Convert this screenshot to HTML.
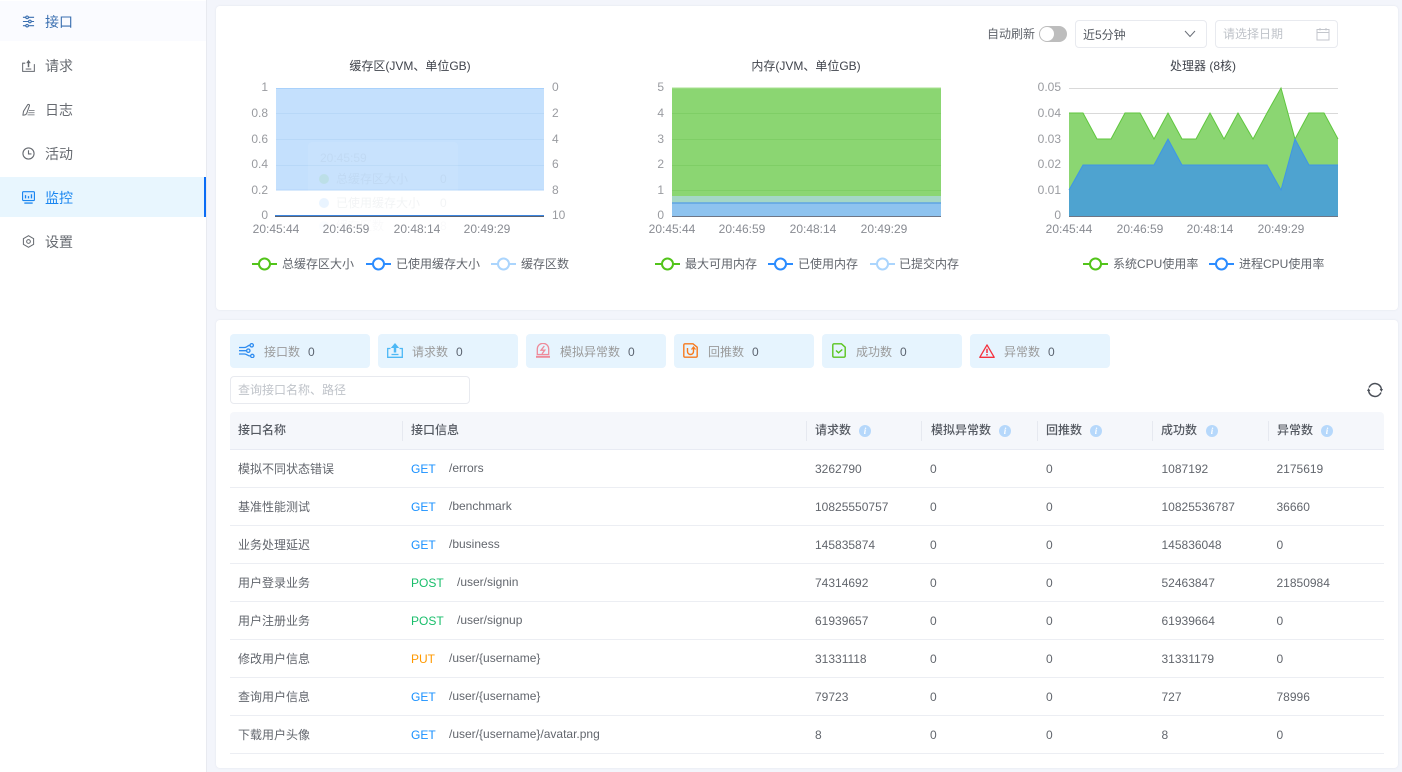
<!DOCTYPE html>
<html lang="zh"><head><meta charset="utf-8"><title>监控</title>
<style>
*{box-sizing:border-box}
html,body{margin:0;padding:0;width:1402px;height:772px;overflow:hidden;background:#f3f5fb;font-family:"Liberation Sans","Noto Sans CJK SC",sans-serif;font-size:12px;color:#62666d}
.a{position:absolute;white-space:nowrap}
#side{position:absolute;left:0;top:0;width:207px;height:772px;background:#fff;border-right:1px solid #e8eaf0}
.m{position:absolute;left:0;width:206px;height:40px;line-height:40px;font-size:14px;padding-left:45px;color:#666a70}
.m svg{position:absolute;left:22px;top:13px}
.panel{position:absolute;left:216px;width:1182px;background:#fff;border-radius:4px;box-shadow:0 0 2px rgba(40,50,90,.08)}
.st{position:absolute;top:334px;width:140px;height:34px;background:#e6f4fe;border-radius:4px;line-height:36px;color:#9a9a9a}
.st svg{position:absolute;top:9px}
.st b{font-weight:400;color:#5c6470;margin-left:8px}
.st span{position:absolute;top:0}
#hd{position:absolute;left:230px;top:412px;width:1154px;height:38px;background:#f5f7fb;border-bottom:1px solid #e8ebf3;border-radius:4px 4px 0 0}
.th{position:absolute;top:0;line-height:37px;color:#555a62;font-weight:500}
.sep{position:absolute;top:9px;width:1px;height:20px;background:#e6e9f0}
.i{position:absolute;top:13px;width:12px;height:12px;border-radius:50%;background:#b6d8fb;color:#fff;font:italic bold 9px/12px "Liberation Serif",serif;text-align:center}
.row{position:absolute;left:230px;width:1154px;height:38px;border-bottom:1px solid #eceef3;line-height:37px;color:#62666d}
.row span{position:absolute;top:1px;white-space:nowrap}
.row .p{top:0}
.row .po{color:#19be6b}.row .pu{color:#ff9900}.row .g{color:#1890ff}
svg text{font-family:"Liberation Sans","Noto Sans CJK SC",sans-serif}
</style></head><body>

<div id="side">
<div style="position:absolute;left:0;top:1px;width:206px;height:40px;background:#fafbff"></div>
<div style="position:absolute;left:0;top:177px;width:206px;height:40px;background:#e8f6fe;border-right:2px solid #0a6cf5"></div>
<div class="m" style="top:2px;color:#3a6fb0"><svg width="13" height="13" viewBox="0 0 14 14" fill="none" stroke="#3a6fb0" stroke-width="1.2"><path d="M1 2.500h3M7 2.500h6M1 7h6M10 7h3M1 11.500h3M7 11.500h6"/><circle cx="5.500" cy="2.500" r="1.400"/><circle cx="8.500" cy="7" r="1.400"/><circle cx="5.500" cy="11.500" r="1.400"/></svg>接口</div>
<div class="m" style="top:46px"><svg width="13" height="13" viewBox="0 0 14 14" fill="none" stroke="#666a70" stroke-width="1.100"><path d="M3.500 4.500H.7v8.800h12.600V5.500"/><path d="M4 10.800h6"/><path d="M7 8.800V3.500" stroke-width="1.600"/><path d="M4.600 4.500 7 .8l2.400 3.700z" fill="#666a70" stroke="none"/></svg>请求</div>
<div class="m" style="top:90px"><svg width="13" height="13" viewBox="0 0 14 14" fill="none" stroke="#666a70"><path d="M1 13 1.600 9 6 2c.7-1 2.300-.4 2 .9L5 11.500C4 12.700 2.400 13.200 1 13z" stroke-width="1.100"/><path d="M7.500 8.200h6M6.800 10.500h6.700M6 12.800h7.500" stroke-width=".9"/></svg>日志</div>
<div class="m" style="top:134px"><svg width="13" height="13" viewBox="0 0 14 14" fill="none" stroke="#666a70" stroke-width="1.200"><circle cx="7" cy="7" r="6"/><path d="M7 3.500V7.500h3.200"/></svg>活动</div>
<div class="m" style="top:178px;color:#1a86f0"><svg width="13" height="13" viewBox="0 0 14 14"><rect x=".6" y=".8" width="12.800" height="9.500" rx="1" fill="#dcefff" stroke="#1a86f0" stroke-width="1.200"/><path d="M3.800 4.500v3.500M7 5.500V8M10.200 3.500V8" stroke="#1a86f0" stroke-width="1.400"/><path d="M2.500 13h9" stroke="#1a86f0" stroke-width="1.400"/></svg>监控</div>
<div class="m" style="top:222px"><svg width="13" height="13" viewBox="0 0 14 14" fill="none" stroke="#666a70" stroke-width="1.100"><path d="M7 .8 12.500 4v6L7 13.200 1.500 10V4z"/><circle cx="7" cy="7" r="2"/></svg>设置</div>
</div>

<div class="panel" style="top:6px;height:304px"></div>
<div class="panel" style="top:320px;height:448px"></div>

<!-- top controls -->
<div class="a" style="left:987px;top:26px;color:#62666d;line-height:17px">自动刷新</div>
<div class="a" style="left:1039px;top:26px;width:28px;height:16px;border-radius:8px;background:#bdbdbd"><div style="position:absolute;left:1px;top:1px;width:14px;height:14px;border-radius:50%;background:#fff"></div></div>
<div class="a" style="left:1075px;top:20px;width:132px;height:28px;border:1px solid #e8eaef;border-radius:4px;line-height:28px;padding-left:7px;color:#555a62">近5分钟<svg style="position:absolute;left:108px;top:8px" width="12" height="10" viewBox="0 0 12 10" fill="none" stroke="#6a6f78" stroke-width="1"><path d="M1 2l5 5.500L11 2"/></svg></div>
<div class="a" style="left:1215px;top:20px;width:123px;height:28px;border:1px solid #e8eaef;border-radius:4px;line-height:26px;padding-left:7px;color:#bfc3c9">请选择日期<svg style="position:absolute;left:100px;top:6px" width="14" height="14" viewBox="0 0 14 14" fill="none" stroke="#c3c6cc" stroke-width="1"><rect x="1" y="2.500" width="12" height="10.500"/><path d="M1 5.500h12M4 1v2.500M10 1v2.500"/></svg></div>

<!-- charts -->
<svg class="a" style="left:0;top:0" width="1402" height="320" font-size="12" fill="#999ba0">
<!-- chart 1 -->
<text x="410" y="70" text-anchor="middle" fill="#40444c">缓存区(JVM、单位GB)</text>
<g text-anchor="end"><text x="268" y="91">1</text><text x="268" y="117">0.8</text><text x="268" y="143">0.6</text><text x="268" y="168">0.4</text><text x="268" y="194">0.2</text><text x="268" y="219">0</text></g>
<g><text x="552" y="91">0</text><text x="552" y="117">2</text><text x="552" y="143">4</text><text x="552" y="168">6</text><text x="552" y="194">8</text><text x="552" y="219">10</text></g>
<rect x="276" y="88" width="268" height="102" fill="#c4e0fd"/>
<path d="M276 88.500H544" stroke="#a9d1fb"/>
<path d="M276 113.500H544M276 139.500H544M276 165.500H544" stroke="#b8d8f8"/>
<path d="M276 190H544" stroke="#b3d5fa"/>
<g opacity=".08"><rect x="308" y="142" width="150" height="102" rx="4" fill="#fff"/></g>
<g opacity=".09" fill="#7a8a9a"><text x="320" y="162">20:45:59</text><circle cx="324" cy="179" r="5" fill="#52c41a"/><text x="336" y="183">总缓存区大小</text><text x="440" y="183">0</text><circle cx="324" cy="203" r="5" fill="#1890ff"/><text x="336" y="207">已使用缓存大小</text><text x="440" y="207">0</text></g>
<g opacity=".04" fill="#7a8a9a"><circle cx="324" cy="226" r="5" fill="#a6d3ff"/><text x="336" y="230">缓存区数</text><text x="440" y="230">8</text></g>
<path d="M275 216.500H544" stroke="#5a6270" stroke-width="1"/>
<path d="M275 215.500H544" stroke="#3d86e0" stroke-width="1"/>
<g text-anchor="middle" fill="#888b92"><text x="276" y="233">20:45:44</text><text x="346" y="233">20:46:59</text><text x="417" y="233">20:48:14</text><text x="487" y="233">20:49:29</text></g>
<!-- chart 2 -->
<text x="806" y="70" text-anchor="middle" fill="#40444c">内存(JVM、单位GB)</text>
<g text-anchor="end"><text x="664" y="91">5</text><text x="664" y="117">4</text><text x="664" y="143">3</text><text x="664" y="168">2</text><text x="664" y="194">1</text><text x="664" y="219">0</text></g>
<rect x="672" y="88" width="269" height="128" fill="#8bd672"/>
<path d="M672 88H941" stroke="#a8e092"/>
<path d="M672 113.500H941M672 139.500H941M672 165.500H941M672 190.500H941" stroke="#7fce66"/>
<rect x="672" y="196" width="269" height="20" fill="#a4d7c6"/>
<rect x="672" y="203" width="269" height="13" fill="#8ec3ef"/>
<path d="M672 203H941" stroke="#5fa4e4" stroke-width="1.500"/>
<path d="M672 216.500H941" stroke="#6e7686"/>
<g text-anchor="middle" fill="#888b92"><text x="672" y="233">20:45:44</text><text x="742" y="233">20:46:59</text><text x="813" y="233">20:48:14</text><text x="884" y="233">20:49:29</text></g>
<!-- chart 3 -->
<text x="1203" y="70" text-anchor="middle" fill="#40444c">处理器 (8核)</text>
<g text-anchor="end"><text x="1061" y="91">0.05</text><text x="1061" y="117">0.04</text><text x="1061" y="143">0.03</text><text x="1061" y="168">0.02</text><text x="1061" y="194">0.01</text><text x="1061" y="219">0</text></g>
<path d="M1069 88.500H1338M1069 113.500H1338M1069 139.500H1338M1069 165.500H1338M1069 190.500H1338" stroke="#d9d9d9"/>
<path d="M1069 216V113 L1083 113 1097 139 1111 139 1125 113 1140 113 1154 139 1168 113 1182 139 1196 139 1210 113 1224 139 1238 113 1253 139 1267 113 1281 88 1295 139 1309 113 1324 113 1338 139V216Z" fill="#8bd672"/>
<path d="M1069 113 L1083 113 1097 139 1111 139 1125 113 1140 113 1154 139 1168 113 1182 139 1196 139 1210 113 1224 139 1238 113 1253 139 1267 113 1281 88 1295 139 1309 113 1324 113 1338 139" fill="none" stroke="#5fc63e"/>
<path d="M1069 216V190 L1083 165 1097 165 1111 165 1125 165 1140 165 1154 165 1168 139 1182 165 1196 165 1210 165 1224 165 1238 165 1253 165 1267 165 1281 190 1295 139 1309 165 1324 165 1338 165V216Z" fill="#4ea3d0"/>
<path d="M1069 190 L1083 165 1097 165 1111 165 1125 165 1140 165 1154 165 1168 139 1182 165 1196 165 1210 165 1224 165 1238 165 1253 165 1267 165 1281 190 1295 139 1309 165 1324 165 1338 165" fill="none" stroke="#3f96e6"/>
<path d="M1069 216.500H1338" stroke="#6e7686"/>
<g text-anchor="middle" fill="#888b92"><text x="1069" y="233">20:45:44</text><text x="1140" y="233">20:46:59</text><text x="1210" y="233">20:48:14</text><text x="1281" y="233">20:49:29</text></g>
<!-- legends -->
<g fill="#fff" stroke-width="2">
<g stroke="#52c41a"><path d="M252 264h25"/><circle cx="264.500" cy="264" r="5.500"/><path d="M655 264h25"/><circle cx="667.500" cy="264" r="5.500"/><path d="M1083 264h25"/><circle cx="1095.500" cy="264" r="5.500"/></g>
<g stroke="#2b8cff"><path d="M366 264h25"/><circle cx="378.500" cy="264" r="5.500"/><path d="M768 264h25"/><circle cx="780.500" cy="264" r="5.500"/><path d="M1209 264h25"/><circle cx="1221.500" cy="264" r="5.500"/></g>
<g stroke="#abd5fd"><path d="M491 264h25"/><circle cx="503.500" cy="264" r="5.500"/><path d="M870 264h25"/><circle cx="882.500" cy="264" r="5.500"/></g>
</g>
<g fill="#62666d"><text x="282" y="268">总缓存区大小</text><text x="396" y="268">已使用缓存大小</text><text x="521" y="268">缓存区数</text><text x="685" y="268">最大可用内存</text><text x="798" y="268">已使用内存</text><text x="899" y="268">已提交内存</text><text x="1113" y="268">系统CPU使用率</text><text x="1239" y="268">进程CPU使用率</text></g>
</svg>

<!-- stats -->
<div class="st" style="left:230px"><svg style="left:9px" width="16" height="15" viewBox="0 0 16 15" fill="none" stroke="#2f8cf0" stroke-width="1.300"><path d="M0 4.500h5.500c2.500 0 3-2.200 5.200-2.200M0 7.700h7.300M0 11h5.500c2.500 0 3 2 5.800 2"/><circle cx="12.700" cy="2.300" r="1.700"/><circle cx="9.300" cy="7.700" r="1.700"/><circle cx="13.300" cy="13" r="1.700"/></svg><span style="left:34px">接口数<b>0</b></span></div>
<div class="st" style="left:378px"><svg style="left:9px" width="16" height="15" viewBox="0 0 16 15" fill="none" stroke="#4db8f5" stroke-width="1.300"><path d="M3.500 5.500H.7v8.800h14.600V5.500h-2.800"/><path d="M4.500 11.500h7"/><path d="M8 4v5.500" stroke-width="2.500"/><path d="M3.800 5 8 0l4.200 5z" fill="#4db8f5" stroke="none"/></svg><span style="left:34px">请求数<b>0</b></span></div>
<div class="st" style="left:526px"><svg style="left:10px" width="14" height="15" viewBox="0 0 14 15" fill="none" stroke="#ee8a9a" stroke-width="1.300"><path d="M1.300 11.500V6a5.700 5.700 0 0 1 11.400 0v5.500z"/><path d="M0 13.800h14" stroke-width="2"/><path d="M8.300 3 5 7.200h3.800L6 10.800" stroke-width="1.300"/></svg><span style="left:34px">模拟异常数<b>0</b></span></div>
<div class="st" style="left:674px"><svg style="left:9px" width="15" height="15" viewBox="0 0 15 15" fill="none" stroke="#f77a1f" stroke-width="1.400"><path d="M2 .8h8l4.200 3.400V13a1.200 1.200 0 0 1-1.200 1.200H2A1.200 1.200 0 0 1 .8 13V2A1.200 1.200 0 0 1 2 .8z"/><path d="M4.500 5v3.500a3 3 0 0 0 6 0V4.500"/><path d="M8.500 6.500 10.500 4l2 2.500" stroke-width="1.200"/></svg><span style="left:34px">回推数<b>0</b></span></div>
<div class="st" style="left:822px"><svg style="left:10px" width="14" height="15" viewBox="0 0 14 15" fill="none" stroke="#5ac41e" stroke-width="1.400"><path d="M2 .8h7.500l3.700 3.400V13a1.200 1.200 0 0 1-1.200 1.200H2A1.200 1.200 0 0 1 .8 13V2A1.200 1.200 0 0 1 2 .8z"/><path d="M4 7.500l2.500 2.300 3.800-3.300"/></svg><span style="left:34px">成功数<b>0</b></span></div>
<div class="st" style="left:970px"><svg style="left:9px;top:10px" width="16" height="14" viewBox="0 0 16 14" fill="none" stroke="#f5313d" stroke-width="1.300"><path d="M8 .9.800 13.300h14.400z" stroke-linejoin="round"/><path d="M8 4.800v4.200M8 10v1.500" stroke-width="1.500"/></svg><span style="left:34px">异常数<b>0</b></span></div>

<div class="a" style="left:230px;top:376px;width:240px;height:28px;border:1px solid #e8eaef;border-radius:4px;line-height:27px;padding-left:7px;color:#bfc3c9">查询接口名称、路径</div>
<svg class="a" style="left:1367px;top:382px" width="16" height="16" viewBox="0 0 16 16" fill="none" stroke="#4a4f58" stroke-width="1.500"><path d="M2 5.500A6.500 6.500 0 0 1 14.400 7M14 10.500A6.500 6.500 0 0 1 1.600 9"/><path d="M12.700 7H16L14.400 10zM0 9h3.300L1.600 6z" fill="#4a4f58" stroke="none"/></svg>

<div id="hd">
<span class="th" style="left:8px">接口名称</span><i class="sep" style="left:172px"></i>
<span class="th" style="left:181px">接口信息</span><i class="sep" style="left:576px"></i>
<span class="th" style="left:585px">请求数</span><i class="i" style="left:629px">i</i><i class="sep" style="left:691px"></i>
<span class="th" style="left:701px">模拟异常数</span><i class="i" style="left:769px">i</i><i class="sep" style="left:807px"></i>
<span class="th" style="left:816px">回推数</span><i class="i" style="left:860px">i</i><i class="sep" style="left:922px"></i>
<span class="th" style="left:931px">成功数</span><i class="i" style="left:976px">i</i><i class="sep" style="left:1038px"></i>
<span class="th" style="left:1047px">异常数</span><i class="i" style="left:1091px">i</i>
</div>

<div class="row" style="top:450px"><span style="left:8px">模拟不同状态错误</span><span class="g" style="left:181px">GET</span><span class="p" style="left:219px">/errors</span><span style="left:585px">3262790</span><span style="left:700px">0</span><span style="left:816px">0</span><span style="left:931.500px">1087192</span><span style="left:1046.500px">2175619</span></div>
<div class="row" style="top:488px"><span style="left:8px">基准性能测试</span><span class="g" style="left:181px">GET</span><span class="p" style="left:219px">/benchmark</span><span style="left:585px">10825550757</span><span style="left:700px">0</span><span style="left:816px">0</span><span style="left:931.500px">10825536787</span><span style="left:1046.500px">36660</span></div>
<div class="row" style="top:526px"><span style="left:8px">业务处理延迟</span><span class="g" style="left:181px">GET</span><span class="p" style="left:219px">/business</span><span style="left:585px">145835874</span><span style="left:700px">0</span><span style="left:816px">0</span><span style="left:931.500px">145836048</span><span style="left:1046.500px">0</span></div>
<div class="row" style="top:564px"><span style="left:8px">用户登录业务</span><span class="po" style="left:181px">POST</span><span class="p" style="left:227px">/user/signin</span><span style="left:585px">74314692</span><span style="left:700px">0</span><span style="left:816px">0</span><span style="left:931.500px">52463847</span><span style="left:1046.500px">21850984</span></div>
<div class="row" style="top:602px"><span style="left:8px">用户注册业务</span><span class="po" style="left:181px">POST</span><span class="p" style="left:227px">/user/signup</span><span style="left:585px">61939657</span><span style="left:700px">0</span><span style="left:816px">0</span><span style="left:931.500px">61939664</span><span style="left:1046.500px">0</span></div>
<div class="row" style="top:640px"><span style="left:8px">修改用户信息</span><span class="pu" style="left:181px">PUT</span><span class="p" style="left:219px">/user/{username}</span><span style="left:585px">31331118</span><span style="left:700px">0</span><span style="left:816px">0</span><span style="left:931.500px">31331179</span><span style="left:1046.500px">0</span></div>
<div class="row" style="top:678px"><span style="left:8px">查询用户信息</span><span class="g" style="left:181px">GET</span><span class="p" style="left:219px">/user/{username}</span><span style="left:585px">79723</span><span style="left:700px">0</span><span style="left:816px">0</span><span style="left:931.500px">727</span><span style="left:1046.500px">78996</span></div>
<div class="row" style="top:716px"><span style="left:8px">下载用户头像</span><span class="g" style="left:181px">GET</span><span class="p" style="left:219px">/user/{username}/avatar.png</span><span style="left:585px">8</span><span style="left:700px">0</span><span style="left:816px">0</span><span style="left:931.500px">8</span><span style="left:1046.500px">0</span></div>
</body></html>
